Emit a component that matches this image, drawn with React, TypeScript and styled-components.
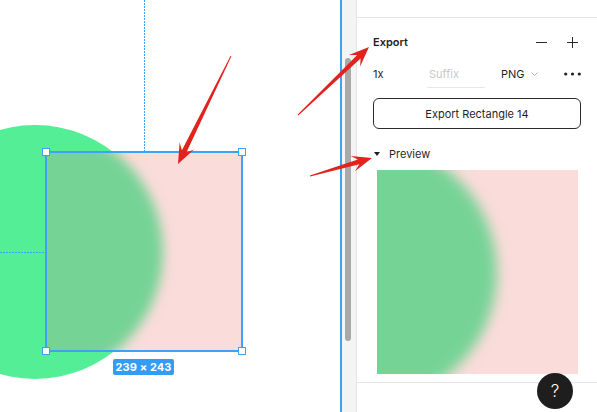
import React, { useId } from "react";
import styled, { createGlobalStyle } from "styled-components";

const Global = createGlobalStyle`
  html, body { margin: 0; padding: 0; background: #fff; overflow: hidden; }
  body { font-family: Inter, "Noto Sans", "Liberation Sans", sans-serif; -webkit-font-smoothing: antialiased; }
  * { box-sizing: border-box; }
`;

const BLUE = "#3aa2f7";
const RED = "#e2221c";

const Page = styled.div`
  position: relative;
  display: flex;
  width: 597px;
  height: 412px;
  overflow: hidden;
  background: #fff;
`;

const Canvas = styled.div`
  position: relative;
  width: 340px;
  height: 100%;
  flex: none;
  overflow: hidden;
  background: #fff;
`;

const CanvasLayer = styled.svg`
  position: absolute;
  left: 0;
  top: 0;
`;

const SelectedNode = styled.div<{ $x: number; $y: number; $w: number; $h: number }>`
  position: absolute;
  left: ${(p) => p.$x}px;
  top: ${(p) => p.$y}px;
  width: ${(p) => p.$w}px;
  height: ${(p) => p.$h}px;
`;

const SelectionOutline = styled.div`
  position: absolute;
  inset: -1px;
  border: 2px solid ${BLUE};
`;

const Handle = styled.div<{ $left: boolean; $top: boolean }>`
  position: absolute;
  width: 8px;
  height: 8px;
  background: #fff;
  border: 1px solid ${BLUE};
  ${(p) => (p.$left ? "left: -4px;" : "right: -4px;")}
  ${(p) => (p.$top ? "top: -4px;" : "bottom: -4px;")}
`;

const SizeBadge = styled.div`
  position: absolute;
  left: 113px;
  top: 359px;
  width: 61px;
  height: 16px;
  border-radius: 2px;
  background: #339cf4;
  color: #fff;
  font-size: 11px;
  font-weight: 700;
  line-height: 16px;
  text-align: center;
  letter-spacing: 0.1px;
`;

const Divider = styled.div`
  width: 2px;
  flex: none;
  background: ${BLUE};
`;

const ScrollTrack = styled.div`
  width: 15px;
  flex: none;
  background: #f4f4f4;
  border-right: 1px solid #e3e3e3;
  padding: 58px 0 0 3px;
`;

const ScrollThumb = styled.div`
  width: 6px;
  height: 283px;
  border-radius: 3px;
  background: #a9a9a9;
`;

const Panel = styled.div`
  flex: 1;
  display: flex;
  flex-direction: column;
  color: #1f1f1f;
  font-size: 11px;
`;

const TopStrip = styled.div`
  height: 18px;
  border-bottom: 1px solid #e6e6e6;
`;

const Section = styled.div`
  padding: 12px 16px 8px;
  border-bottom: 1px solid #e6e6e6;
  display: flex;
  flex-direction: column;
`;

const SectionHeader = styled.div`
  height: 24px;
  display: flex;
  align-items: center;
  justify-content: space-between;
`;

const Title = styled.span`
  font-weight: 600;
  font-size: 11px;
`;

const IconGroup = styled.div`
  display: flex;
  align-items: center;
  gap: 20px;
  margin-right: 3px;
`;

const OptionsRow = styled.div`
  margin-top: 6px;
  height: 28px;
  display: flex;
  align-items: center;
`;

const Scale = styled.span`
  width: 54px;
`;

const SuffixInput = styled.input`
  width: 58px;
  height: 28px;
  border: none;
  border-bottom: 1px solid #e8e8e8;
  padding: 0 0 0 2px;
  font: inherit;
  font-size: 11px;
  outline: none;
  background: transparent;
  &::placeholder { color: #c8c8c8; }
`;

const FormatSelect = styled.div`
  margin-left: 16px;
  display: flex;
  align-items: center;
  gap: 6px;
`;

const MoreButton = styled.div`
  margin-left: auto;
  display: flex;
  align-items: center;
`;

const ExportButton = styled.div`
  margin-top: 10px;
  height: 31px;
  border: 1px solid #2b2b2b;
  border-radius: 6px;
  display: flex;
  align-items: center;
  justify-content: center;
  font-size: 11px;
`;

const PreviewToggle = styled.div`
  margin-top: 15px;
  height: 20px;
  display: flex;
  align-items: center;
  gap: 9px;
  padding-left: 1px;
`;

const PreviewFrame = styled.div`
  margin-top: 6px;
  margin-left: 4px;
  width: 201px;
  height: 204px;
`;

const HelpButton = styled.div`
  position: absolute;
  left: 537px;
  top: 373px;
  width: 36px;
  height: 36px;
  border-radius: 50%;
  background: #1e1e1e;
  color: #fff;
  display: flex;
  align-items: center;
  justify-content: center;
  font-size: 17px;
  font-weight: 300;
`;

const Annotations = styled.svg`
  position: absolute;
  left: 0;
  top: 0;
  pointer-events: none;
`;

function BlurredFill({ width, height }: { width: number; height: number }) {
  const id = useId().replace(/:/g, "");
  return (
    <svg width={width} height={height} viewBox="0 0 196 199" preserveAspectRatio="none" style={{ display: "block" }}>
      <defs>
        <filter id={`b${id}`} x="-50%" y="-50%" width="200%" height="200%">
          <feGaussianBlur stdDeviation="6" />
        </filter>
        <clipPath id={`c${id}`}>
          <rect x="0" y="0" width="196" height="199" />
        </clipPath>
      </defs>
      <g clipPath={`url(#c${id})`}>
        <rect x="0" y="0" width="196" height="199" fill="#fadcda" />
        <circle cx="-11" cy="100" r="128" fill="#76d396" filter={`url(#b${id})`} />
      </g>
    </svg>
  );
}

function arrowPoints(tx: number, ty: number, hx: number, hy: number) {
  const dx = hx - tx;
  const dy = hy - ty;
  const len = Math.hypot(dx, dy);
  const ux = dx / len;
  const uy = dy / len;
  const nx = -uy;
  const ny = ux;
  const headLen = 20;
  const headW = 16;
  const neckBack = 14;
  const shaftW = 5;
  const tailW = 1;
  const pt = (x: number, y: number) => `${x.toFixed(1)},${y.toFixed(1)}`;
  const neckX = hx - ux * neckBack;
  const neckY = hy - uy * neckBack;
  const barbX = hx - ux * headLen;
  const barbY = hy - uy * headLen;
  return [
    pt(tx + (nx * tailW) / 2, ty + (ny * tailW) / 2),
    pt(neckX + (nx * shaftW) / 2, neckY + (ny * shaftW) / 2),
    pt(barbX + (nx * headW) / 2, barbY + (ny * headW) / 2),
    pt(hx, hy),
    pt(barbX - (nx * headW) / 2, barbY - (ny * headW) / 2),
    pt(neckX - (nx * shaftW) / 2, neckY - (ny * shaftW) / 2),
    pt(tx - (nx * tailW) / 2, ty - (ny * tailW) / 2),
  ].join(" ");
}

const arrows = [
  { tx: 231, ty: 56, hx: 178, hy: 164 },
  { tx: 298, ty: 115, hx: 369, hy: 47 },
  { tx: 310, ty: 176, hx: 372, hy: 158 },
];

export default function App() {
  return (
    <>
      <Global />
      <Page>
        <Canvas>
          <CanvasLayer width={340} height={412}>
            <circle cx="35" cy="252" r="127" fill="#53ee95" />
            <line x1="144.5" y1="0" x2="144.5" y2="152" stroke={BLUE} strokeWidth="1" strokeDasharray="2 1" />
            <line x1="0" y1="252.5" x2="46" y2="252.5" stroke={BLUE} strokeWidth="1" strokeDasharray="2 1" />
          </CanvasLayer>
          <SelectedNode $x={46} $y={152} $w={196} $h={199}>
            <BlurredFill width={196} height={199} />
            <SelectionOutline />
            <Handle $left $top />
            <Handle $left={false} $top />
            <Handle $left $top={false} />
            <Handle $left={false} $top={false} />
          </SelectedNode>
          <SizeBadge>239 × 243</SizeBadge>
        </Canvas>
        <Divider />
        <ScrollTrack>
          <ScrollThumb />
        </ScrollTrack>
        <Panel>
          <TopStrip />
          <Section>
            <SectionHeader>
              <Title>Export</Title>
              <IconGroup>
                <svg width="11" height="11" viewBox="0 0 11 11">
                  <line x1="0" y1="5.5" x2="11" y2="5.5" stroke="#2a2a2a" strokeWidth="1" />
                </svg>
                <svg width="11" height="11" viewBox="0 0 11 11">
                  <line x1="0" y1="5.5" x2="11" y2="5.5" stroke="#2a2a2a" strokeWidth="1" />
                  <line x1="5.5" y1="0" x2="5.5" y2="11" stroke="#2a2a2a" strokeWidth="1" />
                </svg>
              </IconGroup>
            </SectionHeader>
            <OptionsRow>
              <Scale>1x</Scale>
              <SuffixInput placeholder="Suffix" readOnly />
              <FormatSelect>
                <span>PNG</span>
                <svg width="7" height="4" viewBox="0 0 7 4">
                  <path d="M0.5 0.5 L3.5 3.5 L6.5 0.5" fill="none" stroke="#b0b0b0" strokeWidth="1" />
                </svg>
              </FormatSelect>
              <MoreButton>
                <svg width="17" height="4" viewBox="0 0 17 4">
                  <circle cx="1.7" cy="2" r="1.6" fill="#222" />
                  <circle cx="8.5" cy="2" r="1.6" fill="#222" />
                  <circle cx="15.3" cy="2" r="1.6" fill="#222" />
                </svg>
              </MoreButton>
            </OptionsRow>
            <ExportButton>Export Rectangle 14</ExportButton>
            <PreviewToggle>
              <svg width="6" height="4" viewBox="0 0 6 4">
                <path d="M0 0 L6 0 L3 4 Z" fill="#1f1f1f" />
              </svg>
              <span>Preview</span>
            </PreviewToggle>
            <PreviewFrame>
              <BlurredFill width={201} height={204} />
            </PreviewFrame>
          </Section>
        </Panel>
        <HelpButton>?</HelpButton>
        <Annotations width={597} height={412}>
          {arrows.map((a, i) => (
            <polygon key={i} points={arrowPoints(a.tx, a.ty, a.hx, a.hy)} fill={RED} />
          ))}
        </Annotations>
      </Page>
    </>
  );
}
